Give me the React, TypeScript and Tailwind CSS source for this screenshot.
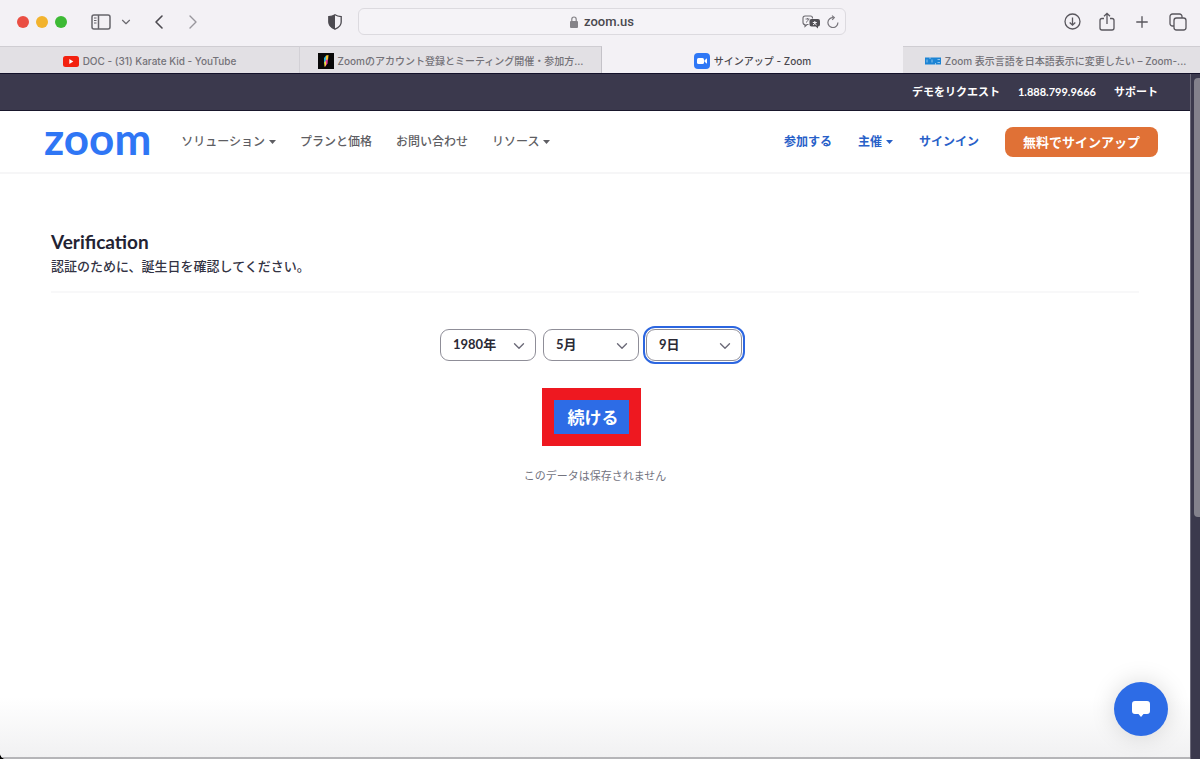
import { ReactNode } from "react";
import { ChevronDown, ChevronLeft, ChevronRight, Plus } from "lucide-react";

const years = Array.from({ length: 100 }, (_, i) => 2021 - i);
const months = Array.from({ length: 12 }, (_, i) => i + 1);
const days = Array.from({ length: 31 }, (_, i) => i + 1);

function SidebarIcon() {
  return (
    <svg width="20" height="16" viewBox="0 0 20 16" fill="none" stroke="#67656b" strokeWidth="1.5">
      <rect x="1" y="1" width="18" height="14" rx="2" />
      <path d="M7.5 1v14" />
      <path d="M3 4h2.5M3 6.5h2.5M3 9h2.5" strokeWidth="1" />
    </svg>
  );
}

function ShieldIcon() {
  return (
    <svg width="14" height="16" viewBox="0 0 14 16">
      <path
        d="M7 .8c2 1.300 4 1.700 6.200 1.900V8c0 3.500-2.800 5.800-6.200 7.200C3.600 13.800.8 11.500.8 8V2.700C3 2.500 5 2.100 7 .8z"
        fill="none"
        stroke="#4c4a50"
        strokeWidth="1.3"
      />
      <path d="M7 .8v14.400C3.600 13.800.8 11.500.8 8V2.700C3 2.500 5 2.100 7 .8z" fill="#4c4a50" />
    </svg>
  );
}

function LockIcon() {
  return (
    <svg width="8" height="12" viewBox="0 0 8 12">
      <rect x="0" y="5" width="8" height="7" rx="1" fill="#858388" />
      <path d="M1.800 5.500V3.200a2.200 2.200 0 0 1 4.400 0v2.300" fill="none" stroke="#858388" strokeWidth="1.2" />
    </svg>
  );
}

function TranslateIcon() {
  return (
    <svg width="19" height="14" viewBox="0 0 19 14">
      <path
        d="M3 1h5.500a2 2 0 0 1 2 2v.5M6.500 9.500H5l-2 2v-2a2 2 0 0 1-2-2V3a2 2 0 0 1 2-2"
        fill="none"
        stroke="#6c6a70"
        strokeWidth="1.1"
      />
      <path d="M3.500 4h4M5.500 3v1M4 7.500c1.500-1 2-2 2.500-3.500" fill="none" stroke="#6c6a70" strokeWidth=".9" />
      <path d="M9.500 4H16a2 2 0 0 1 2 2v3.500a2 2 0 0 1-2 2v2l-2.300-2H9.500a2 2 0 0 1-2-2V6a2 2 0 0 1 2-2z" fill="#4f4d53" />
      <path d="M10.800 7.500h4M12.800 6v1.500M11 10l3-2.500M14.600 10l-2.500-2" stroke="#f3f1f5" strokeWidth="1" />
    </svg>
  );
}

function ReloadIcon() {
  return (
    <svg width="12" height="13" viewBox="0 0 12 13" fill="none" stroke="#77757b" strokeWidth="1.2">
      <path d="M10.900 7.500A5 5 0 1 1 6.500 2.600" />
      <path d="M5 .6l2.300 2L5.200 4.800" />
    </svg>
  );
}

function DownloadIcon() {
  return (
    <svg width="17" height="17" viewBox="0 0 17 17" fill="none" stroke="#59575d" strokeWidth="1.3">
      <circle cx="8.500" cy="8.500" r="7.500" />
      <path d="M8.500 4.500v7.500M5.700 9.500l2.800 2.700 2.800-2.700" />
    </svg>
  );
}

function ShareIcon() {
  return (
    <svg width="16" height="19" viewBox="0 0 16 19" fill="none" stroke="#59575d" strokeWidth="1.3">
      <path d="M5 6.500H3a2 2 0 0 0-2 2V16a2 2 0 0 0 2 2h10a2 2 0 0 0 2-2V8.500a2 2 0 0 0-2-2h-2" />
      <path d="M8 12V1.500M5 4.300l3-3 3 3" />
    </svg>
  );
}

function TabsIcon() {
  return (
    <svg width="18" height="18" viewBox="0 0 18 18" fill="none" stroke="#59575d" strokeWidth="1.3">
      <rect x="5" y="5" width="12" height="12" rx="2.500" />
      <path d="M5 13H3.500A2.500 2.500 0 0 1 1 10.500v-7A2.500 2.500 0 0 1 3.500 1h7A2.500 2.500 0 0 1 13 3.500V5" />
    </svg>
  );
}

function YoutubeIcon() {
  return (
    <svg width="16" height="11" viewBox="0 0 16 11">
      <rect width="16" height="11" rx="2.500" fill="#f3210f" />
      <path d="M6.300 3v5l4-2.500z" fill="#fff" />
    </svg>
  );
}

function ArticleIcon() {
  return (
    <svg width="16" height="16" viewBox="0 0 16 16">
      <rect width="16" height="16" fill="#080808" />
      <path d="M8 2.500l2.500-.5-.5 5-2 1z" fill="#f2c230" />
      <path d="M6 5l2-2.500V9l-2 2z" fill="#35b6d8" />
      <path d="M7 8l3-2-.5 4.500L7 14z" fill="#e23b9a" />
      <path d="M6.200 9.500L8 8v4l-1.500 2z" fill="#f0dc3a" />
    </svg>
  );
}

function ZoomIcon() {
  return (
    <svg width="16" height="16" viewBox="0 0 16 16">
      <rect width="16" height="16" rx="4" fill="#2f78f6" />
      <rect x="3" y="5" width="7" height="6" rx="1.500" fill="#fff" />
      <path d="M10.500 7.200L13 5.300v5.400l-2.500-1.900z" fill="#fff" />
    </svg>
  );
}

function DocIcon() {
  return (
    <svg width="16" height="8" viewBox="0 0 16 8">
      <rect y=".5" width="16" height="7" fill="#1c84d4" />
      <path d="M2 2.500v3M7 2.500v3M12.500 2.500h2.500M12.500 5.500h2.500M5 0v2M10.500 6v2" stroke="#a9d4f2" strokeWidth=".8" />
    </svg>
  );
}

function Caret() {
  return (
    <svg width="7" height="4" viewBox="0 0 7 4" fill="currentColor">
      <path d="M0 0h7L3.500 4z" />
    </svg>
  );
}

function BrowserTab({ icon, title, active, customClass = "" }: {
  icon: ReactNode;
  title: string;
  active?: boolean;
  customClass?: string;
}) {
  return (
    <button
      className={`flex h-full items-center justify-center gap-1 border-t pt-0.5 font-[Inter,'Noto_Sans_CJK_JP',sans-serif] text-[10px] font-medium whitespace-nowrap ${
        active ? "border-[#f3f1f5] bg-[#f3f1f5] text-[#4a484e]" : "border-[#cfcdd2] bg-[#e2e0e4] text-[#747278]"
      } ${customClass}`}
    >
      <span className="shrink-0">{icon}</span>
      <span>{title}</span>
    </button>
  );
}

function DateSelect({ label, unit, options, value, focused }: {
  label: string;
  unit: string;
  options: number[];
  value: number;
  focused?: boolean;
}) {
  return (
    <div className={`relative rounded-[9px] ${focused ? "outline-2 outline-offset-1 outline-[#2c66e0]" : ""}`}>
      <select
        aria-label={label}
        defaultValue={value}
        className="h-8 w-24 appearance-none rounded-[9px] border border-[#8f8e98] bg-white pl-3 text-[13px] font-bold text-[#2b2a35] outline-none"
      >
        {options.map((option) => (
          <option key={option} value={option}>
            {option}
            {unit}
          </option>
        ))}
      </select>
      <ChevronDown size={18} strokeWidth={1.8} color="#6b6a78" className="pointer-events-none absolute top-2 right-2" />
    </div>
  );
}

export default function App() {
  return (
    <div className="flex min-h-screen flex-col bg-black font-[Lato,'Noto_Sans_CJK_JP',sans-serif]">
      <div className="bg-[#f3f1f5] font-[Roboto,'Noto_Sans_CJK_JP',sans-serif]">
        <div className="grid grid-cols-[358fr_488fr_354fr] items-center pt-2 pb-[11px]">
          <div className="flex items-center pr-4 pl-[17px]">
            <div className="flex gap-[7px]">
              <span className="h-3 w-3 rounded-full bg-[#ea4e43]" />
              <span className="h-3 w-3 rounded-full bg-[#f2b32d]" />
              <span className="h-3 w-3 rounded-full bg-[#3dba35]" />
            </div>
            <button aria-label="サイドバー" className="ml-6">
              <SidebarIcon />
            </button>
            <button aria-label="タブグループ" className="ml-2">
              <ChevronDown size={14} color="#6b696f" />
            </button>
            <button aria-label="戻る" className="ml-3.5">
              <ChevronLeft size={24} strokeWidth={1.6} color="#4c4a50" />
            </button>
            <button aria-label="進む" className="ml-2.5">
              <ChevronRight size={24} strokeWidth={1.4} color="#98969c" />
            </button>
            <button aria-label="プライバシー" className="ml-auto">
              <ShieldIcon />
            </button>
          </div>
          <div className="relative flex h-[27px] items-center justify-center gap-1.5 rounded-md border border-[#dcdadf] bg-[#f5f3f7]">
            <LockIcon />
            <span className="text-[13px] font-medium text-[#4a484e]">zoom.us</span>
            <div className="absolute right-1.5 flex items-center gap-1.5">
              <button aria-label="翻訳">
                <TranslateIcon />
              </button>
              <button aria-label="再読み込み">
                <ReloadIcon />
              </button>
            </div>
          </div>
          <div className="flex items-center justify-end gap-[18px] pr-[13px]">
            <button aria-label="ダウンロード">
              <DownloadIcon />
            </button>
            <button aria-label="共有">
              <ShareIcon />
            </button>
            <button aria-label="新規タブ">
              <Plus size={18} strokeWidth={1.8} color="#59575d" />
            </button>
            <button aria-label="タブの概要">
              <TabsIcon />
            </button>
          </div>
        </div>
        <div className="grid h-[27px] grid-cols-[300fr_302fr_301fr_297fr]">
          <BrowserTab icon={<YoutubeIcon />} title="DOC - (31) Karate Kid - YouTube" customClass="border-r border-r-[#d3d1d6]" />
          <BrowserTab
            icon={<ArticleIcon />}
            title="Zoomのアカウント登録とミーティング開催・参加方…"
            customClass="border-r border-r-[#c4c2c8]"
          />
          <BrowserTab icon={<ZoomIcon />} title="サインアップ - Zoom" active />
          <BrowserTab icon={<DocIcon />} title="Zoom 表示言語を日本語表示に変更したい – Zoom-..." customClass="pl-2" />
        </div>
      </div>

      <div className="flex grow border-t border-[#13112a]">
        <div className="flex min-w-0 grow flex-col overflow-hidden rounded-bl-md bg-white">
          <div className="flex h-[37px] items-center justify-end gap-[18px] border-b border-[#19172c] bg-[#3b394d] pr-8 text-[11px] font-bold text-white">
            <a href="#demo">デモをリクエスト</a>
            <a href="tel:18887999666">1.888.799.9666</a>
            <a href="#support">サポート</a>
          </div>

          <header className="flex h-[63px] items-center border-b-2 border-[#f6f6f7] pr-8 pl-11 text-xs">
            <a href="#home" className="pb-2 text-[44px] leading-none font-bold text-[#2f76f5]">
              zoom
            </a>
            <nav className="ml-[30px] flex items-center gap-6 font-medium text-[#5e5e63]">
              <a href="#solutions" className="flex items-center gap-1">
                ソリューション <Caret />
              </a>
              <a href="#pricing">プランと価格</a>
              <a href="#contact">お問い合わせ</a>
              <a href="#resources" className="flex items-center gap-1">
                リソース <Caret />
              </a>
            </nav>
            <nav className="ml-auto flex items-center gap-[26px] font-bold text-[#2860c8]">
              <a href="#join">参加する</a>
              <a href="#host" className="flex items-center gap-1">
                主催 <Caret />
              </a>
              <a href="#signin">サインイン</a>
              <a href="#signup" className="rounded-lg bg-[#e07136] px-[18px] py-[5px] text-[13px] leading-5 text-white">
                無料でサインアップ
              </a>
            </nav>
          </header>

          <main className="flex grow flex-col bg-[linear-gradient(to_top,#f1f1f2,#ffffff_60px)] px-[51px] pt-[54px]">
            <h1 className="text-[19px] leading-7 font-bold text-[#232333]">Verification</h1>
            <p className="text-[13px] leading-5 font-medium text-[#333344]">
              認証のために、誕生日を確認してください。
            </p>
            <div className="mt-[15px] border-b-2 border-[#f8f8f9]" />
            <form className="flex flex-col items-center pt-9 pr-2" onSubmit={(e) => e.preventDefault()}>
              <div className="flex gap-[7px]">
                <DateSelect label="年" unit="年" options={years} value={1980} />
                <DateSelect label="月" unit="月" options={months} value={5} />
                <DateSelect label="日" unit="日" options={days} value={9} focused />
              </div>
              <button className="mt-[27px] border-[12px] border-[#ee1820] bg-[#2d6ce6] pt-1.5 pr-2.5 pb-1 pl-3.5 text-[17px] leading-6 font-bold text-white">
                続ける
              </button>
            </form>
            <p className="mt-5 text-center text-[11px] leading-5 text-[#74747f]">このデータは保存されません</p>
          </main>
          <div className="h-0.5 bg-[#b5b5b8]" />
        </div>
        <div className="w-2.5 border-l border-[#6d6b7b] bg-[#3b394d] pt-1 pl-[3px]">
          <div className="h-[439px] rounded-l-sm bg-[#83818c]" />
        </div>
      </div>

      <button
        aria-label="チャット"
        className="fixed right-8 bottom-[23px] flex h-[54px] w-[54px] items-center justify-center rounded-full bg-[#2d6ce6] shadow-[0_0_24px_rgba(0,0,0,0.15)]"
      >
        <svg width="20" height="18" viewBox="0 0 20 18">
          <path
            d="M4 1h12a3 3 0 0 1 3 3v7a3 3 0 0 1-3 3h-3.500L10 17l-2.500-3H4a3 3 0 0 1-3-3V4a3 3 0 0 1 3-3z"
            fill="#fff"
          />
        </svg>
      </button>
    </div>
  );
}
